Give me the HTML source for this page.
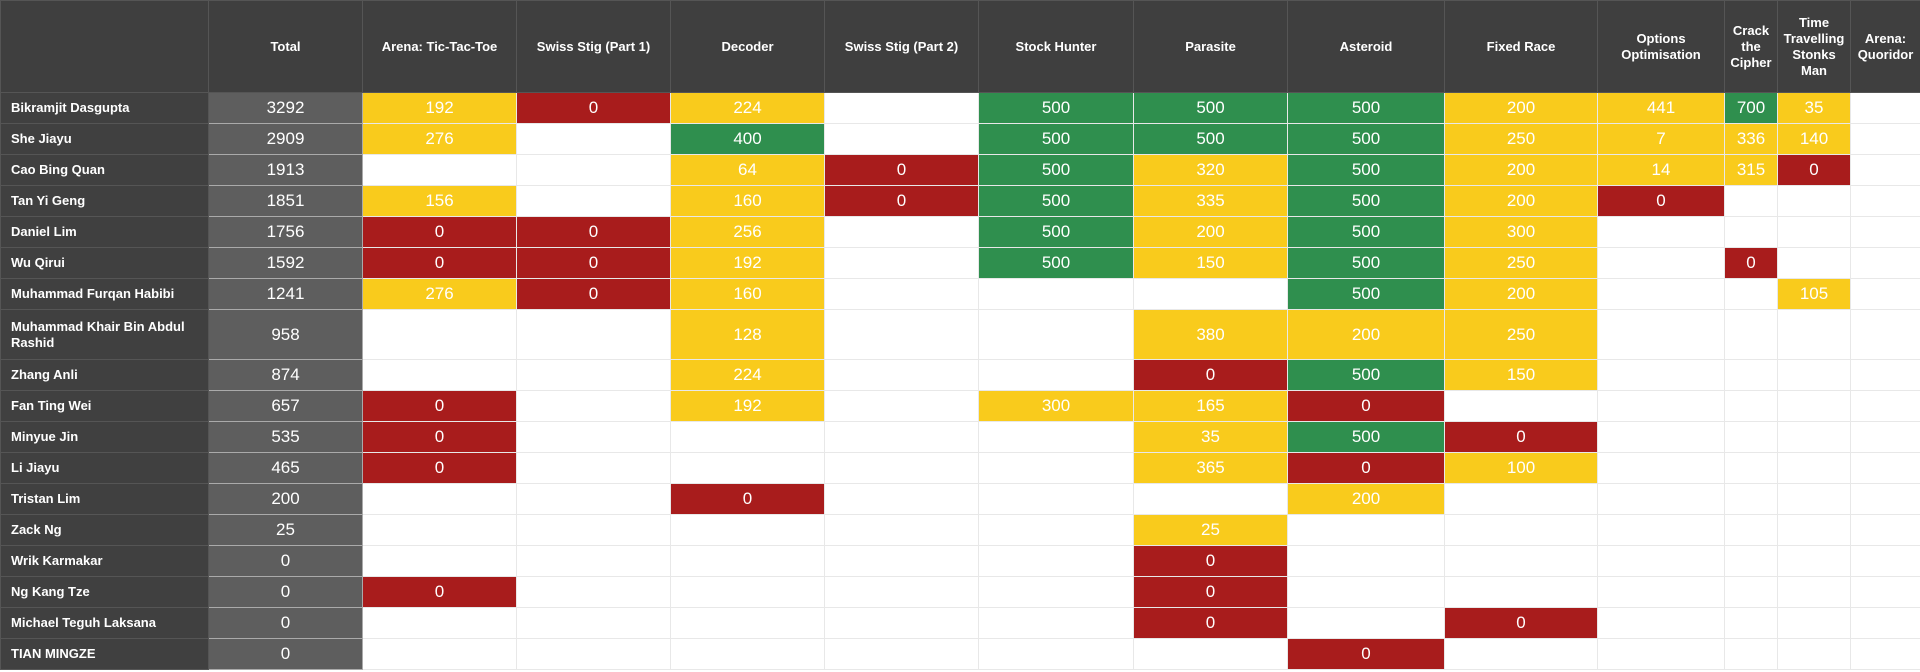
<!DOCTYPE html>
<html><head><meta charset="utf-8"><style>
html,body{margin:0;padding:0;background:#fff;width:1920px;height:672px;overflow:hidden}
table{border-collapse:collapse;table-layout:fixed;width:1920px;font-family:"Liberation Sans",sans-serif}
th{background:#3f3f3f;color:#fff;font-size:13px;font-weight:bold;height:91px;border:1px solid #555;padding:0 2px;line-height:16px}
td{height:30px;border:1px solid #e8e8e8;text-align:center;color:#fff;font-size:17px;padding:0}
td.n{background:#404040;text-align:left;padding-left:10px;font-size:13px;font-weight:bold;border-color:#555;line-height:16px}
td.t{background:#5e5e5e;border-color:#aaa}
.Y{background:#f9cb1c}.R{background:#a81c1c}.G{background:#2f8f4e}
tr.tall td{height:49px}
</style></head><body>
<table>
<colgroup><col style="width:208px"><col style="width:154px"><col style="width:154px"><col style="width:154px"><col style="width:154px"><col style="width:154px"><col style="width:155px"><col style="width:154px"><col style="width:157px"><col style="width:153px"><col style="width:127px"><col style="width:53px"><col style="width:73px"><col style="width:70px"></colgroup>
<tr><th></th><th>Total</th><th>Arena: Tic-Tac-Toe</th><th>Swiss Stig (Part 1)</th><th>Decoder</th><th>Swiss Stig (Part 2)</th><th>Stock Hunter</th><th>Parasite</th><th>Asteroid</th><th>Fixed Race</th><th>Options Optimisation</th><th>Crack the Cipher</th><th>Time Travelling Stonks Man</th><th>Arena: Quoridor</th></tr>
<tr><td class="n">Bikramjit Dasgupta</td><td class="t">3292</td><td class="Y">192</td><td class="R">0</td><td class="Y">224</td><td></td><td class="G">500</td><td class="G">500</td><td class="G">500</td><td class="Y">200</td><td class="Y">441</td><td class="G">700</td><td class="Y">35</td><td></td></tr>
<tr><td class="n">She Jiayu</td><td class="t">2909</td><td class="Y">276</td><td></td><td class="G">400</td><td></td><td class="G">500</td><td class="G">500</td><td class="G">500</td><td class="Y">250</td><td class="Y">7</td><td class="Y">336</td><td class="Y">140</td><td></td></tr>
<tr><td class="n">Cao Bing Quan</td><td class="t">1913</td><td></td><td></td><td class="Y">64</td><td class="R">0</td><td class="G">500</td><td class="Y">320</td><td class="G">500</td><td class="Y">200</td><td class="Y">14</td><td class="Y">315</td><td class="R">0</td><td></td></tr>
<tr><td class="n">Tan Yi Geng</td><td class="t">1851</td><td class="Y">156</td><td></td><td class="Y">160</td><td class="R">0</td><td class="G">500</td><td class="Y">335</td><td class="G">500</td><td class="Y">200</td><td class="R">0</td><td></td><td></td><td></td></tr>
<tr><td class="n">Daniel Lim</td><td class="t">1756</td><td class="R">0</td><td class="R">0</td><td class="Y">256</td><td></td><td class="G">500</td><td class="Y">200</td><td class="G">500</td><td class="Y">300</td><td></td><td></td><td></td><td></td></tr>
<tr><td class="n">Wu Qirui</td><td class="t">1592</td><td class="R">0</td><td class="R">0</td><td class="Y">192</td><td></td><td class="G">500</td><td class="Y">150</td><td class="G">500</td><td class="Y">250</td><td></td><td class="R">0</td><td></td><td></td></tr>
<tr><td class="n">Muhammad Furqan Habibi</td><td class="t">1241</td><td class="Y">276</td><td class="R">0</td><td class="Y">160</td><td></td><td></td><td></td><td class="G">500</td><td class="Y">200</td><td></td><td></td><td class="Y">105</td><td></td></tr>
<tr class="tall"><td class="n">Muhammad Khair Bin Abdul Rashid</td><td class="t">958</td><td></td><td></td><td class="Y">128</td><td></td><td></td><td class="Y">380</td><td class="Y">200</td><td class="Y">250</td><td></td><td></td><td></td><td></td></tr>
<tr><td class="n">Zhang Anli</td><td class="t">874</td><td></td><td></td><td class="Y">224</td><td></td><td></td><td class="R">0</td><td class="G">500</td><td class="Y">150</td><td></td><td></td><td></td><td></td></tr>
<tr><td class="n">Fan Ting Wei</td><td class="t">657</td><td class="R">0</td><td></td><td class="Y">192</td><td></td><td class="Y">300</td><td class="Y">165</td><td class="R">0</td><td></td><td></td><td></td><td></td><td></td></tr>
<tr><td class="n">Minyue Jin</td><td class="t">535</td><td class="R">0</td><td></td><td></td><td></td><td></td><td class="Y">35</td><td class="G">500</td><td class="R">0</td><td></td><td></td><td></td><td></td></tr>
<tr><td class="n">Li Jiayu</td><td class="t">465</td><td class="R">0</td><td></td><td></td><td></td><td></td><td class="Y">365</td><td class="R">0</td><td class="Y">100</td><td></td><td></td><td></td><td></td></tr>
<tr><td class="n">Tristan Lim</td><td class="t">200</td><td></td><td></td><td class="R">0</td><td></td><td></td><td></td><td class="Y">200</td><td></td><td></td><td></td><td></td><td></td></tr>
<tr><td class="n">Zack Ng</td><td class="t">25</td><td></td><td></td><td></td><td></td><td></td><td class="Y">25</td><td></td><td></td><td></td><td></td><td></td><td></td></tr>
<tr><td class="n">Wrik Karmakar</td><td class="t">0</td><td></td><td></td><td></td><td></td><td></td><td class="R">0</td><td></td><td></td><td></td><td></td><td></td><td></td></tr>
<tr><td class="n">Ng Kang Tze</td><td class="t">0</td><td class="R">0</td><td></td><td></td><td></td><td></td><td class="R">0</td><td></td><td></td><td></td><td></td><td></td><td></td></tr>
<tr><td class="n">Michael Teguh Laksana</td><td class="t">0</td><td></td><td></td><td></td><td></td><td></td><td class="R">0</td><td></td><td class="R">0</td><td></td><td></td><td></td><td></td></tr>
<tr><td class="n">TIAN MINGZE</td><td class="t">0</td><td></td><td></td><td></td><td></td><td></td><td></td><td class="R">0</td><td></td><td></td><td></td><td></td><td></td></tr>
</table>
</body></html>
